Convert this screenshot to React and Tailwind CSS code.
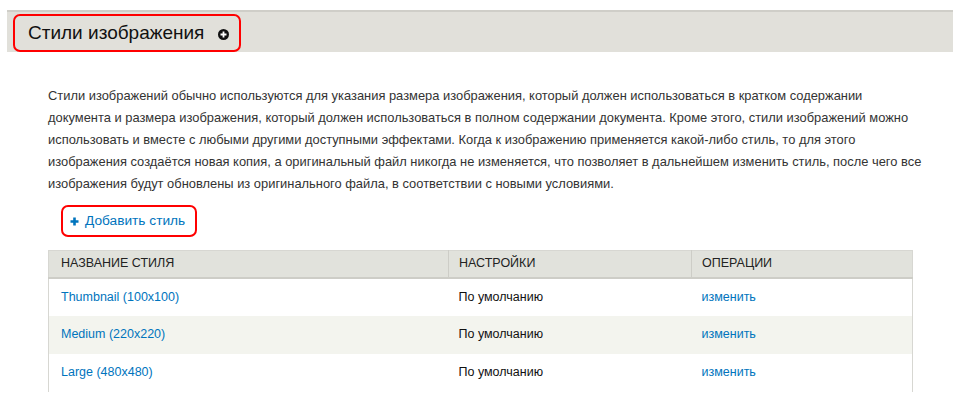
export default function App() {
  const rows = [
    { name: "Thumbnail (100x100)", settings: "По умолчанию" },
    { name: "Medium (220x220)", settings: "По умолчанию" },
    { name: "Large (480x480)", settings: "По умолчанию" },
  ];

  return (
    <div className="w-[961px] h-[399px] bg-white overflow-hidden font-['Liberation_Sans',Arial,sans-serif] text-[#333]">
      {/* Header band */}
      <div className="mt-[10px] ml-[7px] mr-[8px] h-[42px] bg-[#e1e0da] border-t-2 border-[#cfcec8] flex items-end pl-[6px]">
        <div className="h-[38px] w-[228px] border-2 border-[#f00] rounded-[7px] flex items-center pl-[13px]">
          <span className="text-[19px] text-[#111]">Стили изображения</span>
          <span className="ml-[14px] mt-[2px] w-[11px] h-[11px] rounded-full bg-[#111] flex items-center justify-center">
            <svg width="7" height="7" viewBox="0 0 7 7">
              <path d="M3.5 0.5v6M0.5 3.5h6" stroke="#fff" strokeWidth="1.8" />
            </svg>
          </span>
        </div>
      </div>

      <div className="px-[48px]">
        <p className="mt-[33px] text-[12.9px] leading-[22px] text-[#333] w-[875px]">
          Стили изображений обычно используются для указания размера изображения, который должен использоваться в кратком содержании документа и размера изображения, который должен использоваться в полном содержании документа. Кроме этого, стили изображений можно использовать и вместе с любыми другими доступными эффектами. Когда к изображению применяется какой-либо стиль, то для этого изображения создаётся новая копия, а оригинальный файл никогда не изменяется, что позволяет в дальнейшем изменить стиль, после чего все изображения будут обновлены из оригинального файла, в соответствии с новыми условиями.
        </p>

        <div className="mt-[10px] ml-[13px] w-[136px] h-[32px] border-2 border-[#f00] rounded-[7px] flex items-center pl-[7px] gap-[6px]">
          <svg width="9" height="9" viewBox="0 0 9 9">
            <path d="M4.5 0.5v8M0.5 4.5h8" stroke="#0074bd" strokeWidth="2.6" />
          </svg>
          <span className="text-[13.7px] text-[#0074bd]">Добавить стиль</span>
        </div>

        <table className="mt-[13px] w-[865px] border-collapse border border-b-0 border-[#d7d7d2] text-[12.5px]">
          <thead>
            <tr className="bg-[#e1e2dc] h-[27px] border-b-2 border-[#cdcdc7]">
              <th className="w-[400px] text-left font-normal pl-[12px] border-r border-[#cdcdc7] uppercase text-[#222]">Название стиля</th>
              <th className="w-[243px] text-left font-normal pl-[10px] border-r border-[#cdcdc7] text-[#222]">НАСТРОЙКИ</th>
              <th className="text-left font-normal pl-[10px] text-[#222]">ОПЕРАЦИИ</th>
            </tr>
          </thead>
          <tbody>
            {rows.map((r, i) => (
              <tr key={i} className={`h-[38px] ${i === 1 ? "bg-[#f3f4ee]" : "bg-white"}`}>
                <td className="pl-[12px] text-[#0074bd]">{r.name}</td>
                <td className="pl-[10px] text-[#111]">{r.settings}</td>
                <td className="pl-[10px] text-[#0074bd]">изменить</td>
              </tr>
            ))}
          </tbody>
        </table>
      </div>
    </div>
  );
}
